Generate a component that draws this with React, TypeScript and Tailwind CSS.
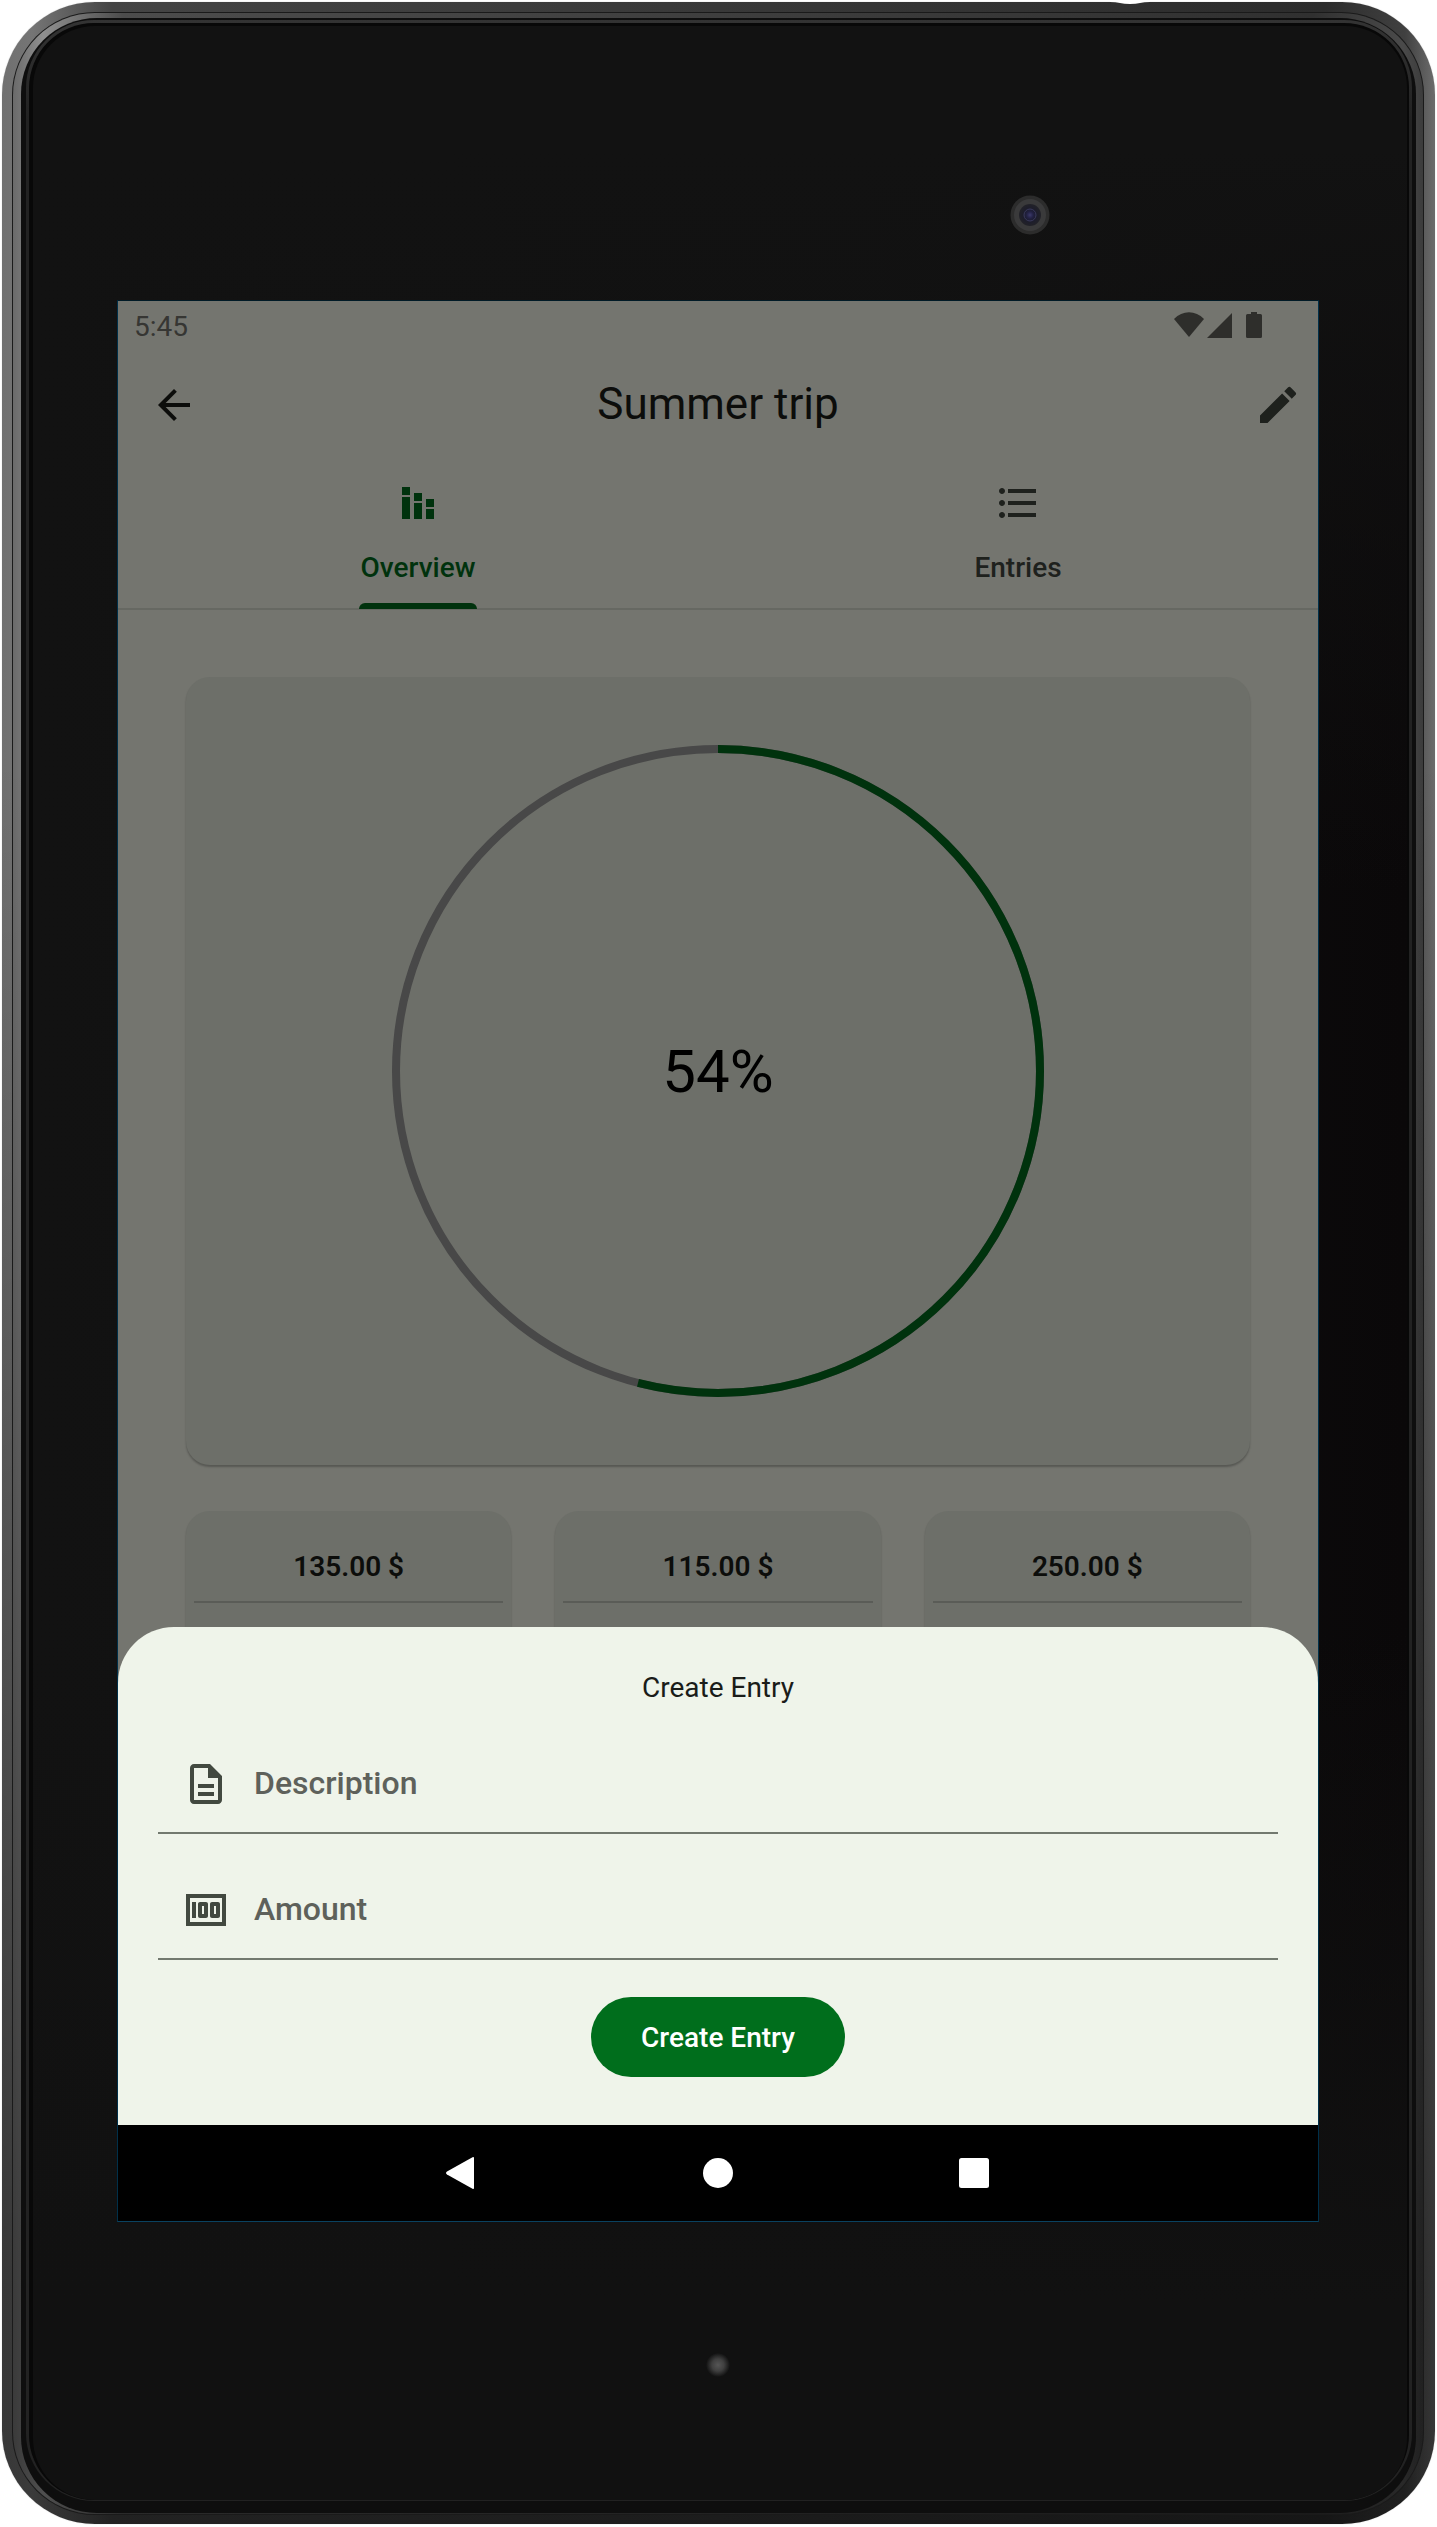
import React from "react";
import {
  MdArrowBack,
  MdEdit,
  MdFormatListBulleted,
  MdMoney,
  MdOutlineDescription,
  MdStackedBarChart,
} from "react-icons/md";

const totals = ["135.00 $", "115.00 $", "250.00 $"];

function StatusBar() {
  return (
    <div className="flex h-12 items-center justify-between pt-1 pr-14 pl-4 text-[28px] leading-8 text-[#363633]">
      <span>5:45</span>
      <svg width="90" height="28" viewBox="0 0 90 28" className="mb-1 fill-[#2e2e2b]" aria-label="Wi-Fi, signal, battery">
        <path d="M2 8C10.500 -1 23.500 -1 32 8L17 26Z" />
        <path d="M60 2V27H35Z" />
        <path d="M79 1h6v2h3.500q1.500 0 1.500 1.500v21q0 1.500-1.500 1.500h-13q-1.500 0-1.500-1.500v-21q0-1.500 1.500-1.500H79z" />
      </svg>
    </div>
  );
}

function AppBar() {
  return (
    <header className="grid h-28 grid-cols-[48px_1fr_48px] items-center pr-4 pl-8">
      <button type="button" aria-label="Back" className="text-[#0c0d0b]">
        <MdArrowBack size={48} />
      </button>
      <h1 className="pr-4 pb-0.5 text-center text-[44px] leading-[56px] text-[#0c0d0b]">Summer trip</h1>
      <button type="button" aria-label="Edit" className="text-[#1e211d]">
        <MdEdit size={48} />
      </button>
    </header>
  );
}

function Tabs() {
  return (
    <div role="tablist" className="grid h-[149px] grid-cols-2 border-b-2 border-[#666862] text-[28px] leading-10 font-medium">
      <button type="button" role="tab" aria-selected="true" className="flex justify-center text-[#00320d]">
        <span className="flex h-[148px] flex-col items-center pt-[18px]">
          <MdStackedBarChart size={48} />
          <span className="mt-[21px] px-0.5">Overview</span>
          <span className="mt-auto h-1.5 w-full rounded-t-md bg-[#00320d]" />
        </span>
      </button>
      <button type="button" role="tab" aria-selected="false" className="flex flex-col items-center pt-[18px] text-[#1e211d]">
        <MdFormatListBulleted size={48} />
        <span className="mt-[21px]">Entries</span>
      </button>
    </div>
  );
}

function Progress({ percent }: { percent: number }) {
  return (
    <section className="grid place-items-center rounded-3xl bg-[#6d6f69] py-[68px] shadow-[0_2px_2px_rgba(0,0,0,0.25)]">
      <svg width="652" height="652" viewBox="0 0 652 652" fill="none" strokeWidth="8" className="[grid-area:1/1]">
        <circle cx="326" cy="326" r="322" stroke="#484848" />
        <circle
          cx="326"
          cy="326"
          r="322"
          stroke="#00320d"
          pathLength="100"
          strokeDasharray={`${percent} ${100 - percent}`}
          transform="rotate(-90 326 326)"
        />
      </svg>
      <span className="pt-0.5 text-[60px] leading-[72px] text-black [grid-area:1/1]">{percent}%</span>
    </section>
  );
}

function Total({ amount }: { amount: string }) {
  return (
    <section className="h-[200px] rounded-3xl bg-[#6d6f69] px-2 shadow-[0_2px_2px_rgba(0,0,0,0.25)]">
      <p className="border-b-2 border-[#5a5c57] pt-9 pb-3.5 text-center text-[28px] leading-10 font-semibold text-[#0c0d0b]">
        {amount}
      </p>
    </section>
  );
}

function Field({ icon, name }: { icon: React.ReactNode; name: string }) {
  return (
    <label className="flex h-[126px] items-center gap-6 border-b-2 border-[#72796f] pt-7 pl-6 text-[#424940]">
      {icon}
      <input
        type="text"
        aria-label={name}
        placeholder={name}
        className="h-12 min-w-0 flex-1 bg-transparent pb-0.5 text-[32px] leading-10 font-medium outline-none placeholder:text-[#5e615b]"
      />
    </label>
  );
}

function CreateEntrySheet() {
  return (
    <form
      role="dialog"
      aria-label="Create Entry"
      className="relative z-10 flex flex-col self-end rounded-t-[56px] bg-[#eff4ea] px-10 pt-[41px] pb-12 [grid-area:1/1]"
    >
      <h2 className="text-center text-[28px] leading-10 text-[#1a1c19]">Create Entry</h2>
      <Field icon={<MdOutlineDescription size={48} />} name="Description" />
      <Field icon={<MdMoney size={48} />} name="Amount" />
      <button
        type="button"
        className="mt-[37px] h-20 min-w-[254px] self-center rounded-full bg-[#006e1c] px-12 pt-0.5 text-[28px] leading-10 font-medium text-white"
      >
        Create Entry
      </button>
    </form>
  );
}

function NavBar() {
  return (
    <nav className="flex h-24 items-center justify-center gap-[208px] bg-black">
      <button type="button" aria-label="Back">
        <svg width="48" height="48" viewBox="0 0 48 48" className="fill-white">
          <path d="M36 9v30q0 1.500-1.500 .8L9 25.500q-2-1.500 0-3L34.500 8.200q1.500-.7 1.500 .8z" />
        </svg>
      </button>
      <button type="button" aria-label="Home">
        <svg width="48" height="48" viewBox="0 0 48 48" className="fill-white">
          <circle cx="24" cy="24" r="15" />
        </svg>
      </button>
      <button type="button" aria-label="Recent apps">
        <svg width="48" height="48" viewBox="0 0 48 48" className="fill-white">
          <rect x="9" y="9" width="30" height="30" rx="2.500" />
        </svg>
      </button>
    </nav>
  );
}

function Screen() {
  return (
    <div className="border border-t-[#001a26] border-r-[#00304a] border-b-[#0a4260] border-l-[#00304a] bg-[#74756f]">
      <div className="grid">
        <main className="h-[1824px] [grid-area:1/1]">
          <StatusBar />
          <AppBar />
          <Tabs />
          <div className="flex flex-col gap-[46px] px-[68px] pt-[67px]">
            <Progress percent={54} />
            <div className="grid grid-cols-3 gap-11">
              {totals.map((amount) => (
                <Total key={amount} amount={amount} />
              ))}
            </div>
          </div>
        </main>
        <CreateEntrySheet />
      </div>
      <NavBar />
    </div>
  );
}

function Camera() {
  return (
    <svg width="40" height="40" viewBox="0 0 40 40" aria-hidden="true">
      <defs>
        <radialGradient id="lens">
          <stop offset="0" stopColor="#3c3a6a" />
          <stop offset="0.3" stopColor="#222144" />
          <stop offset="0.55" stopColor="#1c1c2c" />
          <stop offset="1" stopColor="#222228" />
        </radialGradient>
      </defs>
      <circle cx="20" cy="20" r="19.500" fill="#2c2c2c" />
      <circle cx="20" cy="20" r="16" fill="#3a3a3b" />
      <circle cx="20" cy="20" r="11" fill="url(#lens)" />
      <circle cx="20" cy="20" r="6" fill="none" stroke="#3a3a5c" />
    </svg>
  );
}

function Led() {
  return (
    <svg width="24" height="24" viewBox="0 0 24 24" aria-hidden="true">
      <defs>
        <radialGradient id="led">
          <stop offset="0" stopColor="#565656" />
          <stop offset="0.5" stopColor="#404040" />
          <stop offset="1" stopColor="#111111" />
        </radialGradient>
      </defs>
      <circle cx="12" cy="12" r="12" fill="url(#led)" />
    </svg>
  );
}

export default function App() {
  return (
    <div className="relative bg-white px-0.5 pt-0.5 pb-[3px] font-[Roboto,sans-serif]">
      <div className="rounded-[93px] bg-[linear-gradient(to_bottom,transparent_30%,rgba(0,0,0,0.5)_90%),linear-gradient(to_right,#707070_0,#757575_30px,#444_110px,#2c2c2c_calc(100%_-_110px),#404040_calc(100%_-_30px),#6c6c6c_100%)] pt-2.5 pr-[11px] pb-[9px] pl-2.5 shadow-[0_0_1px_rgba(120,120,120,0.6)]">
        <div className="rounded-[83px] bg-[#1a1a1a] p-px">
          <div className="rounded-[82px] bg-[linear-gradient(to_bottom,transparent_30%,rgba(0,0,0,0.45)_90%),linear-gradient(to_right,#6a6a6a_0,#909090_30px,#4c4c4c_110px,#303030_calc(100%_-_110px),#4a4a4a_calc(100%_-_20px),#3c3c3c_100%)] pt-[5px] pr-[7px] pb-px pl-2">
            <div className="rounded-[76px] bg-[#0e0e0e] pt-0.5 pr-1 pb-3 pl-[5px]">
              <div className="rounded-[68px] bg-[linear-gradient(to_bottom,#333_0,#222_100px)] pt-[3px] pr-[3px] pb-px pl-[3px]">
                <div className="rounded-[65px] bg-[#080808] pt-[3px] pr-0.5 pl-1">
                  <div className="rounded-[62px] bg-[linear-gradient(to_bottom,#121212_5%,transparent_35%,transparent_65%,#111_92%),linear-gradient(to_right,#121212_0,#101010_60%,#0a0809_100%)]">
                    <div className="flex h-[274px] items-start justify-end pt-[169px] pr-[26%]">
                      <Camera />
                    </div>
                    <div className="pr-[88px] pl-[84px]">
                      <Screen />
                      <div className="flex h-[278px] justify-center pt-[131px]">
                        <Led />
                      </div>
                    </div>
                  </div>
                </div>
              </div>
            </div>
          </div>
        </div>
      </div>
      <svg width="40" height="4" viewBox="0 0 40 4" className="absolute top-0 left-[1110px] fill-white" aria-hidden="true">
        <path d="M0 0h40v2q-6 0-10 1t-10 1t-10-1t-10-1z" />
      </svg>
    </div>
  );
}
